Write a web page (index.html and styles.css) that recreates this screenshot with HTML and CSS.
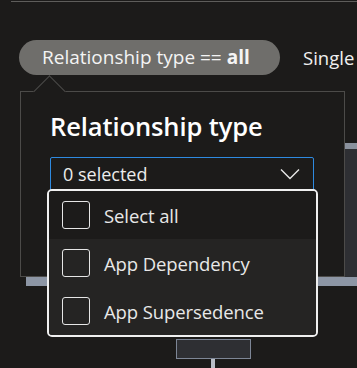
FILE: index.html
```html
<!DOCTYPE html>
<html>
<head>
<meta charset="utf-8">
<link rel="stylesheet" href="styles.css">
</head>
<body>
<div class="canvas">
  <div class="topline"></div>
  <div class="toolbar">
    <div class="pill">Relationship type == <b>all</b></div>
    <div class="tab">Single</div>
  </div>

  <div class="node node-big"></div>
  <div class="node node-small"></div>
  <div class="edge"></div>

  <div class="callout">
    <h2 class="callout-title">Relationship type</h2>
    <div class="select">
      <span class="select-value">0 selected</span>
      <svg class="chevron" width="20" height="12" viewBox="0 0 20 12"><polyline points="1,1.5 10,10.5 19,1.5" fill="none" stroke="#e8e8e8" stroke-width="1.4"/></svg>
    </div>
    <div class="listbox">
      <div class="option"><span class="check"></span><span class="label">Select all</span></div>
      <div class="option alt"><span class="check"></span><span class="label">App Dependency</span></div>
      <div class="option alt"><span class="check"></span><span class="label">App Supersedence</span></div>
    </div>
  </div>
</div>
</body>
</html>
```
FILE: styles.css
```css
html, body {
  margin: 0;
  padding: 0;
  background: #1c1b1a;
}
.canvas {
  position: relative;
  width: 357px;
  height: 368px;
  overflow: hidden;
  background: #1c1b1a;
  font-family: "Open Sans", "Noto Sans", sans-serif;
  color: #f2f2f2;
}
.topline {
  margin: 1px 0 0 11px;
  height: 1px;
  background: #5e5d5b;
}
.toolbar {
  display: flex;
  align-items: center;
  gap: 23px;
  margin-top: 38px;
  padding-left: 19px;
}
.pill {
  height: 35px;
  width: 261px;
  box-sizing: border-box;
  padding-left: 23px;
  border-radius: 18px;
  background: #6f6e6b;
  color: #f4f4f4;
  font-size: 19px;
  line-height: 34px;
  white-space: nowrap;
}
.pill b {
  font-weight: 700;
}
.tab {
  font-size: 18.5px;
  color: #f0f0f0;
  margin-top: -1px;
}
.node {
  position: absolute;
  box-sizing: border-box;
  background: #2e2f33;
}
.node-big {
  left: 26px;
  top: 143px;
  width: 360px;
  height: 143px;
  border-top: 6px solid #8a919d;
  border-bottom: 9px solid #8d96a5;
}
.node-small {
  left: 176px;
  top: 339px;
  width: 75px;
  height: 20px;
  border: 1px solid #7d8696;
}
.edge {
  position: absolute;
  left: 211px;
  top: 359px;
  width: 4px;
  height: 10px;
  background: #b9bec7;
}
.callout {
  position: absolute;
  left: 20px;
  top: 91px;
  width: 325px;
  height: 186px;
  box-sizing: border-box;
  border: 1px solid #4c4b49;
  background: #1c1b1a;
  padding: 17px 30px 0 29px;
}
.callout::before {
  content: "";
  position: absolute;
  left: 17px;
  top: -12px;
  width: 22px;
  height: 22px;
  background: #1c1b1a;
  border-left: 1px solid #4c4b49;
  border-top: 1px solid #4c4b49;
  transform: rotate(45deg);
}
.callout-title {
  position: relative;
  margin: 0;
  font-size: 25.5px;
  font-weight: 600;
  line-height: 34px;
  letter-spacing: -0.1px;
  color: #ffffff;
}
.select {
  margin-top: 14px;
  height: 34px;
  box-sizing: border-box;
  border: 1px solid #2e8ae0;
  border-radius: 2px;
  display: flex;
  align-items: center;
  justify-content: space-between;
  padding: 0 13px 0 12px;
}
.select-value {
  font-size: 18px;
  color: #ececec;
  margin-top: -1px;
}
.chevron {
  margin-top: 0;
}
.listbox {
  position: absolute;
  left: 26px;
  top: 97px;
  width: 271px;
  box-sizing: border-box;
  border: 2px solid #f0f0f0;
  border-radius: 5px;
  background: #252423;
  overflow: hidden;
  box-shadow: inset 0 0 0 1px #4a4a4a;
}
.option {
  height: 48px;
  display: flex;
  align-items: center;
  gap: 14px;
  padding-left: 13px;
  background: #1c1b1a;
}
.option.alt {
  background: #252423;
}
.check {
  width: 28px;
  height: 28px;
  box-sizing: border-box;
  border: 1.5px solid #e6e6e6;
  border-radius: 3px;
  flex: none;
}
.label {
  font-size: 18.5px;
  color: #e8e8e8;
  letter-spacing: -0.1px;
}
```
